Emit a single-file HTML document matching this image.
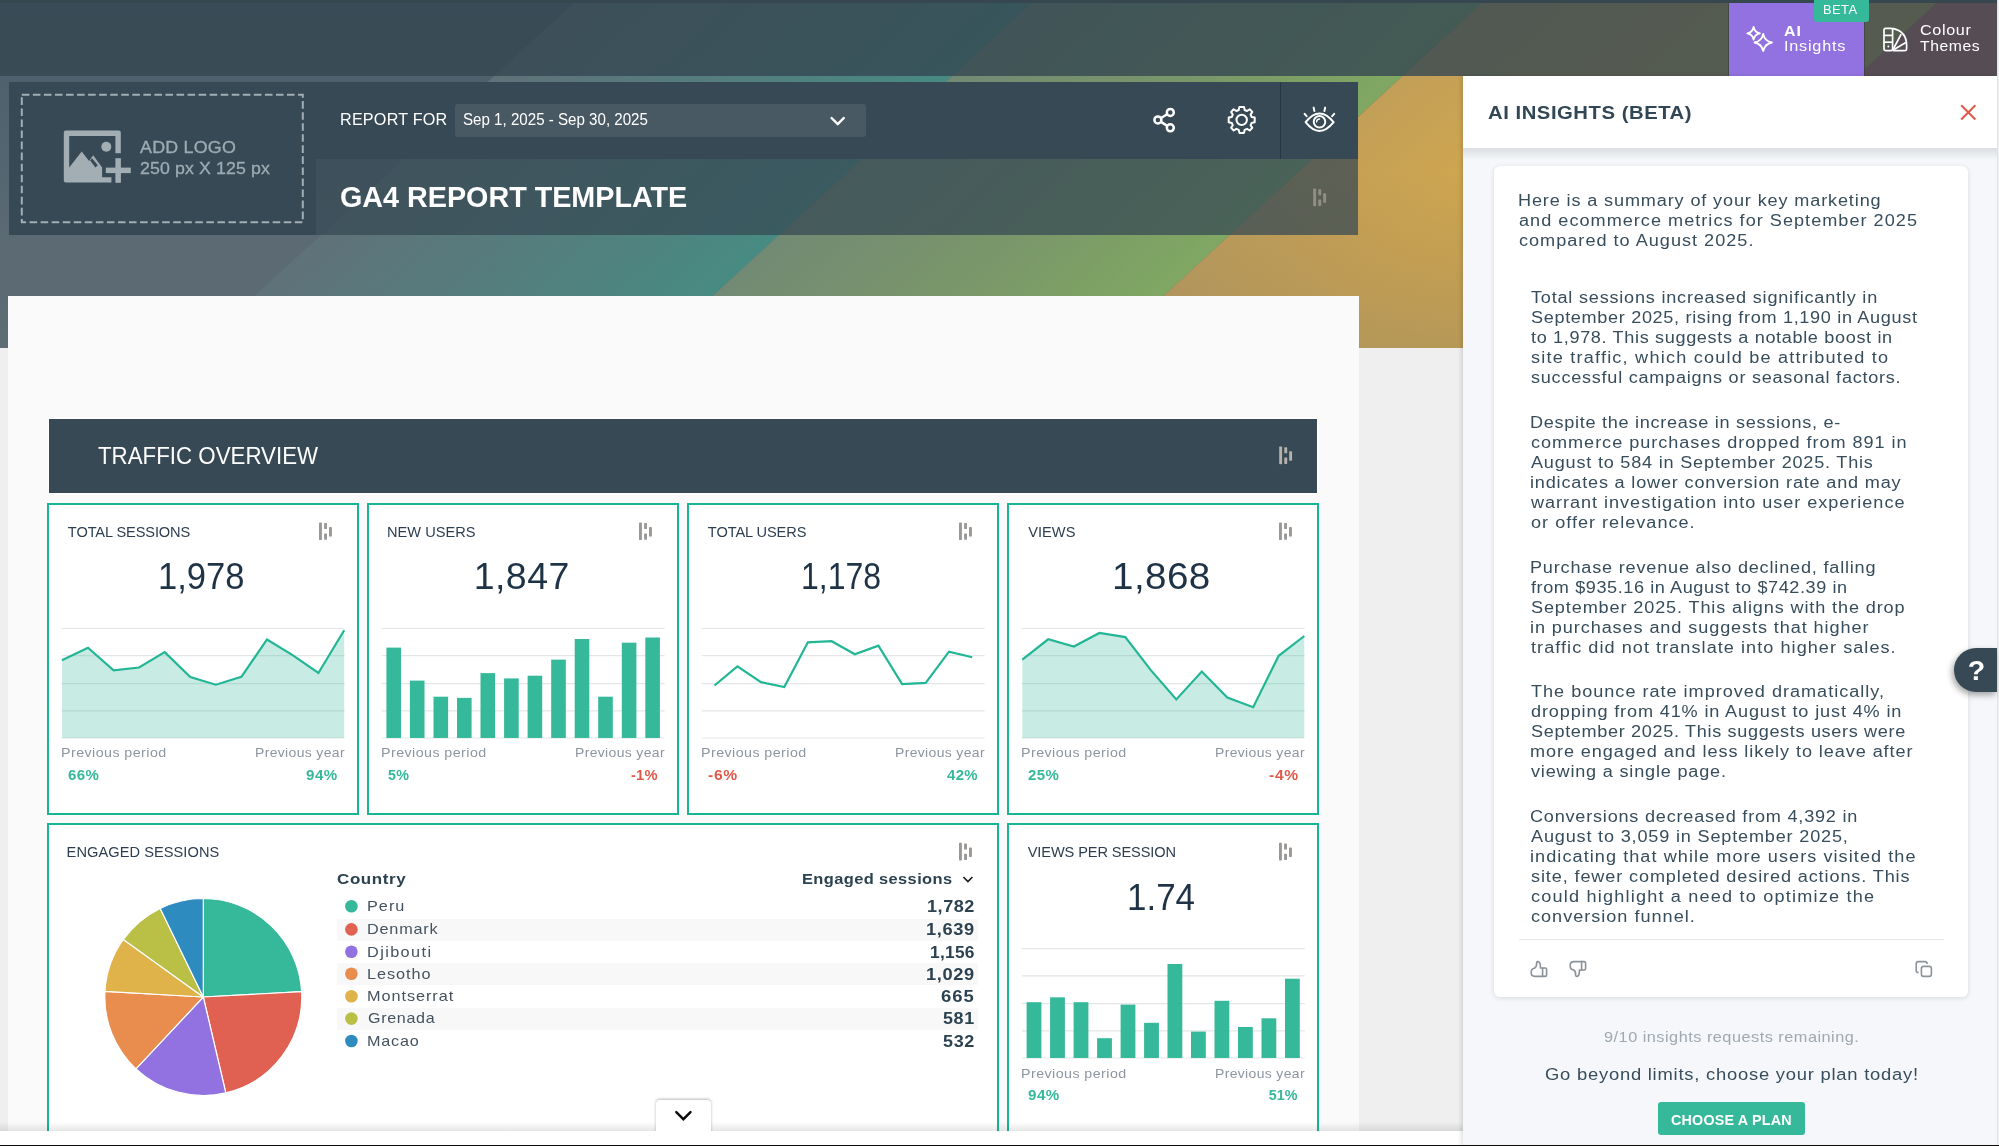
<!DOCTYPE html>
<html><head><meta charset="utf-8"><title>GA4 Report Template</title><style>
html,body{margin:0;padding:0}
body{width:1999px;height:1146px;overflow:hidden;position:relative;background:#efefef;font-family:"Liberation Sans",sans-serif}
div,svg,span{position:absolute;box-sizing:border-box}
.t{white-space:pre;line-height:normal;transform-origin:0 50%;font-family:"Liberation Sans",sans-serif}
.card{background:#fff;border:2px solid #17b593}
</style></head><body>
<!-- banner with diagonal colour bands -->
<svg width="1999" height="348" viewBox="0 0 1999 348" style="left:0;top:0">
 <defs>
  <linearGradient id="bg1" gradientUnits="userSpaceOnUse" x1="0" y1="0" x2="0" y2="348"><stop offset="0" stop-color="#4b5d69"/><stop offset="0.25" stop-color="#4f616c"/><stop offset="0.7" stop-color="#5b6a73"/><stop offset="1" stop-color="#5e6c74"/></linearGradient>
  <linearGradient id="bg2" gradientUnits="userSpaceOnUse" x1="255" y1="296" x2="465" y2="524"><stop offset="0" stop-color="#5f7279"/><stop offset="0.35" stop-color="#587a7c"/><stop offset="0.8" stop-color="#4d8580"/><stop offset="1" stop-color="#478b82"/></linearGradient>
  <linearGradient id="bg3" gradientUnits="userSpaceOnUse" x1="713" y1="296" x2="923" y2="524"><stop offset="0" stop-color="#728a74"/><stop offset="0.5" stop-color="#79966a"/><stop offset="1" stop-color="#80a862"/></linearGradient>
  <linearGradient id="bg4" gradientUnits="userSpaceOnUse" x1="1163" y1="296" x2="1373" y2="524"><stop offset="0" stop-color="#c29f58"/><stop offset="0.4" stop-color="#d0a64f"/><stop offset="1" stop-color="#d8ac49"/></linearGradient>
  <linearGradient id="bg4v" gradientUnits="userSpaceOnUse" x1="0" y1="170" x2="0" y2="348"><stop offset="0" stop-color="#6a6a6a" stop-opacity="0"/><stop offset="1" stop-color="#6f7072" stop-opacity="0.30"/></linearGradient>
 </defs>
 <rect x="0" y="0" width="1999" height="348" fill="url(#bg1)"/>
 <polygon points="577,0 1035,0 656,348 198,348" fill="url(#bg2)"/>
 <polygon points="1035,0 1485,0 1107,348 656,348" fill="url(#bg3)"/>
 <polygon points="1485,0 1940,0 1562,348 1107,348" fill="url(#bg4)"/>
 <polygon points="1485,0 1940,0 1562,348 1107,348" fill="url(#bg4v)"/>
 <polygon points="1940,0 1999,0 1999,348 1562,348" fill="#da605b"/>
</svg>
<!-- body grey below banner on the right of the page -->
<!-- top bar overlay -->
<div style="left:0;top:0;width:1999px;height:76px;background:rgba(53,71,81,0.80)"></div>
<div style="left:0;top:0;width:1999px;height:3px;background:#36474f"></div>
<!-- AI insights / colour themes -->
<div style="left:1729px;top:3px;width:135px;height:73px;background:#9272e0"></div>
<div style="left:1864px;top:3px;width:1px;height:73px;background:rgba(40,40,45,0.35)"></div>
<div style="left:1728px;top:3px;width:1px;height:73px;background:rgba(30,40,45,0.35)"></div>
<div style="left:1814px;top:0;width:55px;height:22px;background:#35b99a;border-radius:0 0 3px 3px"></div>
<div style="left:1997px;top:0;width:2px;height:1146px;background:linear-gradient(90deg,#dfe1e4,#f4f5f7)"></div>

<!-- header block -->
<div style="left:9px;top:82px;width:307px;height:153px;background:#364954"></div>
<div style="left:316px;top:82px;width:1042px;height:77px;background:#364954"></div>
<div style="left:316px;top:159px;width:1042px;height:76px;background:rgba(54,73,84,0.73)"></div>
<div style="left:1280px;top:82px;width:1px;height:77px;background:#27363f"></div>
<div style="left:455px;top:104px;width:411px;height:33px;background:rgba(255,255,255,0.09);border-radius:3px"></div>
<svg width="290" height="136" viewBox="0 0 290 136" style="left:18px;top:91px"><rect x="3.8" y="3.8" width="281" height="127.4" fill="none" stroke="#a3adb4" stroke-width="2" stroke-dasharray="7.6 3.45"/></svg>

<!-- page -->
<div style="left:8px;top:296px;width:1351px;height:850px;background:#fafafa"></div>
<div style="left:48px;top:418px;width:1270px;height:76px;background:#ffffff"></div>
<div style="left:49px;top:419px;width:1268px;height:73.5px;background:#364954"></div>

<!-- metric cards -->
<div class="card" style="left:47px;top:503px;width:312px;height:312px"></div>
<div class="card" style="left:367px;top:503px;width:312px;height:312px"></div>
<div class="card" style="left:687px;top:503px;width:312px;height:312px"></div>
<div class="card" style="left:1007px;top:503px;width:312px;height:312px"></div>
<div class="card" style="left:47px;top:823px;width:952px;height:340px"></div>
<div class="card" style="left:1007px;top:823px;width:312px;height:340px"></div>
<!-- table stripes -->
<div style="left:337px;top:918.8px;width:641px;height:22px;background:#f8f8f8"></div>
<div style="left:337px;top:963.4px;width:641px;height:22px;background:#f8f8f8"></div>
<div style="left:337px;top:1007.6px;width:641px;height:22px;background:#f8f8f8"></div>

<!-- bottom bar + tab -->
<div style="left:0;top:1122px;width:1463px;height:9px;background:linear-gradient(180deg,rgba(0,0,0,0),rgba(20,30,30,0.11))"></div>
<div style="left:656px;top:1100px;width:55px;height:40px;background:#fff;border-radius:4px 4px 0 0;box-shadow:0 -1px 3px rgba(0,0,0,0.28)"></div>
<div style="left:0;top:1131px;width:1463px;height:15px;background:#ffffff"></div>
<div style="left:656px;top:1126px;width:55px;height:8px;background:#fff"></div>

<!-- right panel -->
<div style="left:1463px;top:76px;width:534px;height:1070px;background:#f5f7fa;box-shadow:-2px 0 4px rgba(0,0,0,0.12)"></div>
<div style="left:1463px;top:148px;width:534px;height:12px;background:linear-gradient(180deg,rgba(40,50,60,0.13),rgba(40,50,60,0))"></div>
<div style="left:1463px;top:76px;width:534px;height:72px;background:#ffffff"></div>
<div style="left:1494px;top:166px;width:474px;height:831px;background:#ffffff;border-radius:6px;box-shadow:0 1px 5px rgba(30,40,60,0.14)"></div>
<div style="left:1519px;top:938.6px;width:425px;height:1.2px;background:#e4e7ea"></div>
<div style="left:1657.5px;top:1102px;width:147.5px;height:33px;background:#35b99a;border-radius:3px"></div>
<!-- help button -->
<div style="left:1954px;top:648px;width:43px;height:44px;background:#364954;border-radius:22px 0 0 22px;box-shadow:-2px 3px 6px rgba(0,0,0,0.35)"></div>
<!-- bottom black line -->
<div style="left:0;top:1145px;width:1999px;height:1px;background:#0c0c0c"></div>

<svg width="1999" height="1146" viewBox="0 0 1999 1146" style="left:0;top:0"><line x1="61.8" x2="344.6" y1="628.5" y2="628.5" stroke="#e3e5e6" stroke-width="1.2"/><line x1="61.8" x2="344.6" y1="655.7" y2="655.7" stroke="#e3e5e6" stroke-width="1.2"/><line x1="61.8" x2="344.6" y1="683.6" y2="683.6" stroke="#e3e5e6" stroke-width="1.2"/><line x1="61.8" x2="344.6" y1="710.9" y2="710.9" stroke="#e3e5e6" stroke-width="1.2"/><line x1="61.8" x2="344.6" y1="738.0" y2="738.0" stroke="#e3e5e6" stroke-width="1.2"/>
<polygon points="61.9,660.2 88.0,647.7 113.6,670.3 139.1,667.5 164.7,652.1 190.3,677.1 215.8,684.7 241.4,676.9 267.0,639.5 292.6,655.1 318.4,673.0 344.2,630.3 344.2,738.0 61.9,738.0" fill="#35b99a" fill-opacity="0.27"/><polyline points="61.9,660.2 88.0,647.7 113.6,670.3 139.1,667.5 164.7,652.1 190.3,677.1 215.8,684.7 241.4,676.9 267.0,639.5 292.6,655.1 318.4,673.0 344.2,630.3" fill="none" stroke="#22b695" stroke-width="2.2" stroke-linejoin="miter"/>
<line x1="381.8" x2="664.6" y1="628.5" y2="628.5" stroke="#e3e5e6" stroke-width="1.2"/><line x1="381.8" x2="664.6" y1="655.7" y2="655.7" stroke="#e3e5e6" stroke-width="1.2"/><line x1="381.8" x2="664.6" y1="683.6" y2="683.6" stroke="#e3e5e6" stroke-width="1.2"/><line x1="381.8" x2="664.6" y1="710.9" y2="710.9" stroke="#e3e5e6" stroke-width="1.2"/><line x1="381.8" x2="664.6" y1="738.0" y2="738.0" stroke="#e3e5e6" stroke-width="1.2"/>
<rect x="386.4" y="647.6" width="14.6" height="90.4" fill="#35b99a"/><rect x="409.9" y="680.6" width="14.6" height="57.4" fill="#35b99a"/><rect x="433.5" y="696.7" width="14.6" height="41.3" fill="#35b99a"/><rect x="457.0" y="697.9" width="14.6" height="40.1" fill="#35b99a"/><rect x="480.5" y="673.1" width="14.6" height="64.9" fill="#35b99a"/><rect x="504.1" y="678.4" width="14.6" height="59.6" fill="#35b99a"/><rect x="527.6" y="675.7" width="14.6" height="62.3" fill="#35b99a"/><rect x="551.2" y="659.6" width="14.6" height="78.4" fill="#35b99a"/><rect x="574.7" y="639.0" width="14.6" height="99.0" fill="#35b99a"/><rect x="598.2" y="696.7" width="14.6" height="41.3" fill="#35b99a"/><rect x="621.8" y="642.7" width="14.6" height="95.3" fill="#35b99a"/><rect x="645.3" y="637.5" width="14.6" height="100.5" fill="#35b99a"/>
<line x1="701.8" x2="984.6" y1="628.5" y2="628.5" stroke="#e3e5e6" stroke-width="1.2"/><line x1="701.8" x2="984.6" y1="655.7" y2="655.7" stroke="#e3e5e6" stroke-width="1.2"/><line x1="701.8" x2="984.6" y1="683.6" y2="683.6" stroke="#e3e5e6" stroke-width="1.2"/><line x1="701.8" x2="984.6" y1="710.9" y2="710.9" stroke="#e3e5e6" stroke-width="1.2"/><line x1="701.8" x2="984.6" y1="738.0" y2="738.0" stroke="#e3e5e6" stroke-width="1.2"/>
<polyline points="714.5,685.5 737.4,666.3 761.0,682.1 784.3,687.0 807.9,642.3 831.6,641.2 854.8,654.3 878.4,645.7 902.1,684.0 925.7,682.9 949.0,651.7 972.2,657.3" fill="none" stroke="#22b695" stroke-width="2.2" stroke-linejoin="miter"/>
<line x1="1021.8" x2="1304.6" y1="628.5" y2="628.5" stroke="#e3e5e6" stroke-width="1.2"/><line x1="1021.8" x2="1304.6" y1="655.7" y2="655.7" stroke="#e3e5e6" stroke-width="1.2"/><line x1="1021.8" x2="1304.6" y1="683.6" y2="683.6" stroke="#e3e5e6" stroke-width="1.2"/><line x1="1021.8" x2="1304.6" y1="710.9" y2="710.9" stroke="#e3e5e6" stroke-width="1.2"/><line x1="1021.8" x2="1304.6" y1="738.0" y2="738.0" stroke="#e3e5e6" stroke-width="1.2"/>
<polygon points="1022.3,659.6 1048.2,639.3 1073.9,646.5 1099.4,633.0 1125.3,637.1 1150.8,670.1 1176.3,699.4 1201.8,671.6 1227.3,697.5 1253.2,707.2 1278.7,655.8 1304.3,636.0 1304.3,738.0 1022.3,738.0" fill="#35b99a" fill-opacity="0.27"/><polyline points="1022.3,659.6 1048.2,639.3 1073.9,646.5 1099.4,633.0 1125.3,637.1 1150.8,670.1 1176.3,699.4 1201.8,671.6 1227.3,697.5 1253.2,707.2 1278.7,655.8 1304.3,636.0" fill="none" stroke="#22b695" stroke-width="2.2" stroke-linejoin="miter"/>
<line x1="1022.0" x2="1304.8" y1="948.6" y2="948.6" stroke="#e3e5e6" stroke-width="1.2"/><line x1="1022.0" x2="1304.8" y1="975.8" y2="975.8" stroke="#e3e5e6" stroke-width="1.2"/><line x1="1022.0" x2="1304.8" y1="1003.6" y2="1003.6" stroke="#e3e5e6" stroke-width="1.2"/><line x1="1022.0" x2="1304.8" y1="1030.9" y2="1030.9" stroke="#e3e5e6" stroke-width="1.2"/><line x1="1022.0" x2="1304.8" y1="1058.0" y2="1058.0" stroke="#e3e5e6" stroke-width="1.2"/>
<rect x="1026.6" y="1002.2" width="14.8" height="55.8" fill="#35b99a"/><rect x="1050.1" y="997.3" width="14.8" height="60.7" fill="#35b99a"/><rect x="1073.6" y="1002.2" width="14.8" height="55.8" fill="#35b99a"/><rect x="1097.1" y="1038.2" width="14.8" height="19.8" fill="#35b99a"/><rect x="1120.6" y="1004.6" width="14.8" height="53.4" fill="#35b99a"/><rect x="1144.1" y="1022.8" width="14.8" height="35.2" fill="#35b99a"/><rect x="1167.5" y="964.0" width="14.8" height="94.0" fill="#35b99a"/><rect x="1191.0" y="1031.6" width="14.8" height="26.4" fill="#35b99a"/><rect x="1214.5" y="1000.8" width="14.8" height="57.2" fill="#35b99a"/><rect x="1238.0" y="1027.0" width="14.8" height="31.0" fill="#35b99a"/><rect x="1261.5" y="1018.3" width="14.8" height="39.7" fill="#35b99a"/><rect x="1285.0" y="978.7" width="14.8" height="79.3" fill="#35b99a"/>
<path d="M203.30,997.00 L203.30,898.50 A98.50,98.50 0 0 1 301.65,991.64 Z" fill="#35b99a" stroke="#ffffff" stroke-width="1.2" stroke-linejoin="round"/><path d="M203.30,997.00 L301.65,991.64 A98.50,98.50 0 0 1 225.81,1092.89 Z" fill="#e06052" stroke="#ffffff" stroke-width="1.2" stroke-linejoin="round"/><path d="M203.30,997.00 L225.81,1092.89 A98.50,98.50 0 0 1 135.94,1068.87 Z" fill="#9272e0" stroke="#ffffff" stroke-width="1.2" stroke-linejoin="round"/><path d="M203.30,997.00 L135.94,1068.87 A98.50,98.50 0 0 1 104.96,991.30 Z" fill="#e88d4d" stroke="#ffffff" stroke-width="1.2" stroke-linejoin="round"/><path d="M203.30,997.00 L104.96,991.30 A98.50,98.50 0 0 1 123.35,939.47 Z" fill="#e0b24a" stroke="#ffffff" stroke-width="1.2" stroke-linejoin="round"/><path d="M203.30,997.00 L123.35,939.47 A98.50,98.50 0 0 1 160.22,908.42 Z" fill="#b9c045" stroke="#ffffff" stroke-width="1.2" stroke-linejoin="round"/><path d="M203.30,997.00 L160.22,908.42 A98.50,98.50 0 0 1 203.30,898.50 Z" fill="#2e8bc0" stroke="#ffffff" stroke-width="1.2" stroke-linejoin="round"/>
<circle cx="351.4" cy="906.3" r="6.3" fill="#35b99a"/>
<circle cx="351.4" cy="929.4" r="6.3" fill="#e06052"/>
<circle cx="351.4" cy="951.8" r="6.3" fill="#9272e0"/>
<circle cx="351.4" cy="973.8" r="6.3" fill="#e88d4d"/>
<circle cx="351.4" cy="996.2" r="6.3" fill="#e0b24a"/>
<circle cx="351.4" cy="1018.6" r="6.3" fill="#b9c045"/>
<circle cx="351.4" cy="1041.0" r="6.3" fill="#2e8bc0"/>
<g fill="#9b9794" fill-opacity="1.00"><rect x="319.0" y="522.4" width="2.9" height="17.6" rx="0.6"/><rect x="324.1" y="523.1" width="2.9" height="6" rx="0.6"/><rect x="324.1" y="533.4" width="2.9" height="6.3" rx="0.6"/><rect x="329.0" y="527.1" width="2.9" height="9.4" rx="0.6"/></g>
<g fill="#9b9794" fill-opacity="1.00"><rect x="639.0" y="522.4" width="2.9" height="17.6" rx="0.6"/><rect x="644.1" y="523.1" width="2.9" height="6" rx="0.6"/><rect x="644.1" y="533.4" width="2.9" height="6.3" rx="0.6"/><rect x="649.0" y="527.1" width="2.9" height="9.4" rx="0.6"/></g>
<g fill="#9b9794" fill-opacity="1.00"><rect x="959.0" y="522.4" width="2.9" height="17.6" rx="0.6"/><rect x="964.1" y="523.1" width="2.9" height="6" rx="0.6"/><rect x="964.1" y="533.4" width="2.9" height="6.3" rx="0.6"/><rect x="969.0" y="527.1" width="2.9" height="9.4" rx="0.6"/></g>
<g fill="#9b9794" fill-opacity="1.00"><rect x="1279.0" y="522.4" width="2.9" height="17.6" rx="0.6"/><rect x="1284.1" y="523.1" width="2.9" height="6" rx="0.6"/><rect x="1284.1" y="533.4" width="2.9" height="6.3" rx="0.6"/><rect x="1289.0" y="527.1" width="2.9" height="9.4" rx="0.6"/></g>
<g fill="#9b9794" fill-opacity="1.00"><rect x="959.0" y="842.8" width="2.9" height="17.6" rx="0.6"/><rect x="964.1" y="843.5" width="2.9" height="6" rx="0.6"/><rect x="964.1" y="853.8" width="2.9" height="6.3" rx="0.6"/><rect x="969.0" y="847.5" width="2.9" height="9.4" rx="0.6"/></g>
<g fill="#9b9794" fill-opacity="1.00"><rect x="1279.0" y="842.8" width="2.9" height="17.6" rx="0.6"/><rect x="1284.1" y="843.5" width="2.9" height="6" rx="0.6"/><rect x="1284.1" y="853.8" width="2.9" height="6.3" rx="0.6"/><rect x="1289.0" y="847.5" width="2.9" height="9.4" rx="0.6"/></g>
<g fill="#b5b1ad" fill-opacity="1.00"><rect x="1279.2" y="446.6" width="2.9" height="17.6" rx="0.6"/><rect x="1284.3" y="447.3" width="2.9" height="6" rx="0.6"/><rect x="1284.3" y="457.6" width="2.9" height="6.3" rx="0.6"/><rect x="1289.2" y="451.3" width="2.9" height="9.4" rx="0.6"/></g>
<g fill="#a39d96" fill-opacity="0.75"><rect x="1313.2" y="188.6" width="2.9" height="17.6" rx="0.6"/><rect x="1318.3" y="189.3" width="2.9" height="6" rx="0.6"/><rect x="1318.3" y="199.6" width="2.9" height="6.3" rx="0.6"/><rect x="1323.2" y="193.3" width="2.9" height="9.4" rx="0.6"/></g>
<polyline points="963.4,877.0 967.9,881.6 972.4,877.0" fill="none" stroke="#1d1d1f" stroke-width="1.7"/>
<polyline points="831.6,118 837.7,124.2 843.8,118" fill="none" stroke="#ffffff" stroke-width="2.4" stroke-linecap="round" stroke-linejoin="round"/>
<polyline points="676.3,1112.1 683.4,1119.2 690.5,1112.1" fill="none" stroke="#0a0a0a" stroke-width="2.4" stroke-linecap="round" stroke-linejoin="miter"/></svg>
<svg width="1999" height="1146" viewBox="0 0 1999 1146" style="left:0;top:0">
 <!-- add-logo image icon: origin 64,131 -->
 <g transform="translate(63.8,130.6)" fill="#a3adb4">
  <path fill-rule="evenodd" d="M2,0 H55 a2,2 0 0 1 2,2 V22.6 H51.6 V5.4 H5.4 V37 L17.9,20.8 L25.3,30.4 L29.4,24.7 L38.3,37 V46.6 H47.6 V52 H2 a2,2 0 0 1 -2,-2 V2 a2,2 0 0 1 2,-2 Z"/>
  <circle cx="42.5" cy="16.2" r="5"/>
  <rect x="42" y="37" width="25" height="5.5"/>
  <rect x="51.6" y="27.6" width="5.5" height="24.6"/>
 </g>
 <!-- dark notch between the two mountains -->
 <polygon points="90.2,160.4 92.0,158.2 97.8,165.2 95.4,167.5" fill="#364954"/>

 <!-- share -->
 <g fill="none" stroke="#ffffff" stroke-width="2.5">
  <circle cx="1170.3" cy="112.4" r="3.5"/>
  <circle cx="1157.9" cy="119.9" r="3.5"/>
  <circle cx="1170.3" cy="127.8" r="3.5"/>
  <line x1="1161" y1="118" x2="1167.2" y2="114.3"/>
  <line x1="1161" y1="121.9" x2="1167.2" y2="125.9"/>
 </g>
 <!-- gear -->
 <g transform="translate(1241.7,119.9)" fill="none" stroke="#ffffff" stroke-width="2">
  <circle r="5.2"/>
  <path stroke-linejoin="round" d="M-2.3,-13 H2.3 L3,-9.9 L5.3,-8.9 L8,-10.6 L10.6,-8 L8.9,-5.3 L9.9,-3 L13,-2.3 V2.3 L9.9,3 L8.9,5.3 L10.6,8 L8,10.6 L5.3,8.9 L3,9.9 L2.3,13 H-2.3 L-3,9.9 L-5.3,8.9 L-8,10.6 L-10.6,8 L-8.9,5.3 L-9.9,3 L-13,2.3 V-2.3 L-9.9,-3 L-8.9,-5.3 L-10.6,-8 L-8,-10.6 L-5.3,-8.9 L-3,-9.9 Z"/>
 </g>
 <!-- eye -->
 <g fill="none" stroke="#ffffff" stroke-width="2" stroke-linecap="round">
  <path d="M1305.6,122.2 Q1319.5,104.6 1333.6,122.2 Q1319.5,139.8 1305.6,122.2 Z" stroke-linejoin="round"/>
  <circle cx="1319.5" cy="121.8" r="5.8"/>
  <path d="M1316.6,122 A3,3 0 0 1 1319.6,119" stroke-width="1.4"/>
  <line x1="1314.4" y1="111" x2="1313.6" y2="107.6"/>
  <line x1="1324.4" y1="111" x2="1325.2" y2="107.6"/>
  <line x1="1306.6" y1="116.2" x2="1304.6" y2="113.8"/>
  <line x1="1332.2" y1="116.2" x2="1334.2" y2="113.8"/>
 </g>

 <!-- AI sparkle -->
 <g fill="none" stroke="#ffffff" stroke-width="1.8" stroke-linejoin="round">
  <path d="M1753.6,27 Q1754.6,32.3 1759.9,33.3 Q1754.6,34.3 1753.6,39.6 Q1752.6,34.3 1747.3,33.3 Q1752.6,32.3 1753.6,27 Z"/>
  <path d="M1763.2,33.8 Q1764.6,41.1 1771.9,42.5 Q1764.6,43.9 1763.2,51.2 Q1761.8,43.9 1754.5,42.5 Q1761.8,41.1 1763.2,33.8 Z"/>
 </g>
 <!-- colour themes palette -->
 <g fill="none" stroke="#ffffff" stroke-width="1.7" stroke-linejoin="round">
  <rect x="1884" y="28.4" width="8.6" height="22.2" rx="1.6"/>
  <line x1="1884" y1="35.4" x2="1892.6" y2="35.4"/>
  <line x1="1884" y1="42.2" x2="1892.6" y2="42.2"/>
  <path d="M1892.6,28.4 Q1906.6,31.4 1906.6,45.4 V49 Q1906.6,50.6 1905,50.6 H1892.6"/>
  <line x1="1892.8" y1="50" x2="1901.2" y2="34.2"/>
  <line x1="1892.8" y1="50.2" x2="1905.8" y2="42.4"/>
 </g>
 <circle cx="1888.4" cy="46.4" r="1" fill="#ffffff"/>

 <!-- close X -->
 <g stroke="#e05a4c" stroke-width="2.1" stroke-linecap="butt">
  <line x1="1961.2" y1="105.2" x2="1975.4" y2="119.4"/>
  <line x1="1975.4" y1="105.2" x2="1961.2" y2="119.4"/>
 </g>

 <!-- thumbs up -->
 <g fill="none" stroke="#8a9399" stroke-width="1.6" stroke-linejoin="round" stroke-linecap="round">
  <path d="M1542.6,968 H1545.2 Q1546.6,968 1546.6,969.4 V975 Q1546.6,976.4 1545.2,976.4 H1542.6 Z"/>
  <path d="M1542.6,976.4 H1534.6 Q1531.2,976.4 1531.2,972.6 Q1531.2,968.6 1534.4,968.2 Q1537,966.6 1536.6,962.8 Q1536.8,961.4 1538.2,961.6 Q1540.8,962.8 1540.4,968 H1542.6"/>
 </g>
 <!-- thumbs down -->
 <g fill="none" stroke="#8a9399" stroke-width="1.6" stroke-linejoin="round" stroke-linecap="round">
  <path d="M1581.6,961.6 H1584.2 Q1585.6,961.6 1585.6,963 V968.6 Q1585.6,970 1584.2,970 H1581.6 Z"/>
  <path d="M1581.6,961.6 H1573.6 Q1570.2,961.6 1570.2,965.4 Q1570.2,969.4 1573.4,969.8 Q1576,971.4 1575.6,975.2 Q1575.8,976.6 1577.2,976.4 Q1579.8,975.2 1579.4,970 H1581.6"/>
 </g>
 <!-- copy -->
 <g fill="none" stroke="#8a9399" stroke-width="1.6" stroke-linejoin="round">
  <rect x="1921.4" y="966.4" width="10" height="10" rx="2.2"/>
  <path d="M1918.6,972.4 H1918.2 Q1916.2,972.4 1916.2,970.4 V963.8 Q1916.2,961.6 1918.4,961.6 H1925 Q1927,961.6 1927,963.6 V964"/>
 </g>
</svg>

<div style="left:0;top:0;width:1999px;height:1146px;will-change:transform">
<span class="t" style="left:1823.34px;top:3.33px;font-size:12.00px;color:#ffffff;letter-spacing:0.419px;transform:scaleX(1.0748);">BETA</span>
<span class="t" style="left:1784.20px;top:22.53px;font-size:14.10px;font-weight:700;color:#ffffff;letter-spacing:0.917px;transform:scaleX(1.1300);">AI</span>
<span class="t" style="left:1783.60px;top:38.45px;font-size:14.40px;color:#ffffff;letter-spacing:0.674px;transform:scaleX(1.1300);">Insights</span>
<span class="t" style="left:1919.78px;top:22.25px;font-size:14.40px;color:#ffffff;letter-spacing:0.565px;transform:scaleX(1.1252);">Colour</span>
<span class="t" style="left:1920.25px;top:38.45px;font-size:14.40px;color:#ffffff;letter-spacing:0.533px;transform:scaleX(1.0929);">Themes</span>
<span class="t" style="left:140.37px;top:137.44px;font-size:17.40px;color:#9eaab2;letter-spacing:0.209px;transform:scaleX(1.0270);-webkit-text-stroke:0.35px #9eaab2;">ADD LOGO</span>
<span class="t" style="left:139.51px;top:158.34px;font-size:17.40px;color:#9eaab2;letter-spacing:0.113px;transform:scaleX(1.0212);-webkit-text-stroke:0.35px #9eaab2;">250 px X 125 px</span>
<span class="t" style="left:340.47px;top:111.28px;font-size:15.70px;color:#ffffff;letter-spacing:0.202px;transform:scaleX(1.0305);">REPORT FOR</span>
<span class="t" style="left:463.11px;top:111.28px;font-size:15.70px;color:#ffffff;letter-spacing:0.000px;transform:scaleX(0.9637);">Sep 1, 2025 - Sep 30, 2025</span>
<span class="t" style="left:340.32px;top:180.29px;font-size:29.70px;font-weight:700;color:#ffffff;letter-spacing:0.000px;transform:scaleX(0.9673);">GA4 REPORT TEMPLATE</span>
<span class="t" style="left:98.10px;top:441.67px;font-size:24.20px;color:#ffffff;letter-spacing:0.000px;transform:scaleX(0.9217);">TRAFFIC OVERVIEW</span>
<span class="t" style="left:67.87px;top:523.67px;font-size:14.60px;color:#2c3e50;letter-spacing:-0.109px;">TOTAL SESSIONS</span>
<span class="t" style="left:158.17px;top:555.32px;font-size:37.50px;color:#1f3347;letter-spacing:0.000px;transform:scaleX(0.9221);">1,978</span>
<span class="t" style="left:61.03px;top:745.40px;font-size:12.80px;color:#8c96a0;letter-spacing:0.391px;transform:scaleX(1.1143);">Previous period</span>
<span class="t" style="left:255.06px;top:745.40px;font-size:12.80px;color:#8c96a0;letter-spacing:0.326px;transform:scaleX(1.0903);">Previous year</span>
<span class="t" style="left:67.95px;top:767.04px;font-size:14.30px;font-weight:700;color:#35b99a;letter-spacing:0.411px;transform:scaleX(1.0509);">66%</span>
<span class="t" style="left:306.48px;top:767.04px;font-size:14.30px;font-weight:700;color:#35b99a;letter-spacing:0.458px;transform:scaleX(1.0569);">94%</span>
<span class="t" style="left:387.00px;top:523.67px;font-size:14.60px;color:#2c3e50;letter-spacing:0.010px;">NEW USERS</span>
<span class="t" style="left:473.74px;top:555.32px;font-size:37.50px;color:#1f3347;letter-spacing:0.425px;">1,847</span>
<span class="t" style="left:381.03px;top:745.40px;font-size:12.80px;color:#8c96a0;letter-spacing:0.391px;transform:scaleX(1.1143);">Previous period</span>
<span class="t" style="left:575.06px;top:745.40px;font-size:12.80px;color:#8c96a0;letter-spacing:0.326px;transform:scaleX(1.0903);">Previous year</span>
<span class="t" style="left:388.06px;top:767.04px;font-size:14.30px;font-weight:700;color:#35b99a;letter-spacing:0.345px;">5%</span>
<span class="t" style="left:631.23px;top:767.04px;font-size:14.30px;font-weight:700;color:#e05a4c;letter-spacing:0.185px;transform:scaleX(1.0253);">-1%</span>
<span class="t" style="left:707.87px;top:523.67px;font-size:14.60px;color:#2c3e50;letter-spacing:-0.089px;">TOTAL USERS</span>
<span class="t" style="left:801.46px;top:555.32px;font-size:37.50px;color:#1f3347;letter-spacing:0.000px;transform:scaleX(0.8528);">1,178</span>
<span class="t" style="left:701.03px;top:745.40px;font-size:12.80px;color:#8c96a0;letter-spacing:0.391px;transform:scaleX(1.1143);">Previous period</span>
<span class="t" style="left:895.06px;top:745.40px;font-size:12.80px;color:#8c96a0;letter-spacing:0.326px;transform:scaleX(1.0903);">Previous year</span>
<span class="t" style="left:707.89px;top:767.04px;font-size:14.30px;font-weight:700;color:#e05a4c;letter-spacing:0.643px;transform:scaleX(1.0936);">-6%</span>
<span class="t" style="left:947.07px;top:767.04px;font-size:14.30px;font-weight:700;color:#35b99a;letter-spacing:0.358px;transform:scaleX(1.0435);">42%</span>
<span class="t" style="left:1028.14px;top:523.67px;font-size:14.60px;color:#2c3e50;letter-spacing:0.051px;">VIEWS</span>
<span class="t" style="left:1112.21px;top:555.32px;font-size:37.50px;color:#1f3347;letter-spacing:0.400px;transform:scaleX(1.0301);">1,868</span>
<span class="t" style="left:1021.03px;top:745.40px;font-size:12.80px;color:#8c96a0;letter-spacing:0.391px;transform:scaleX(1.1143);">Previous period</span>
<span class="t" style="left:1215.06px;top:745.40px;font-size:12.80px;color:#8c96a0;letter-spacing:0.326px;transform:scaleX(1.0903);">Previous year</span>
<span class="t" style="left:1027.98px;top:767.04px;font-size:14.30px;font-weight:700;color:#35b99a;letter-spacing:0.407px;transform:scaleX(1.0502);">25%</span>
<span class="t" style="left:1268.59px;top:767.04px;font-size:14.30px;font-weight:700;color:#e05a4c;letter-spacing:0.627px;transform:scaleX(1.0910);">-4%</span>
<span class="t" style="left:66.60px;top:844.17px;font-size:14.60px;color:#2c3e50;letter-spacing:0.067px;">ENGAGED SESSIONS</span>
<span class="t" style="left:336.90px;top:870.14px;font-size:15.30px;font-weight:700;color:#2c4250;letter-spacing:0.576px;transform:scaleX(1.1078);">Country</span>
<span class="t" style="left:802.00px;top:870.04px;font-size:15.30px;font-weight:700;color:#2c4250;letter-spacing:0.369px;transform:scaleX(1.0730);">Engaged sessions</span>
<span class="t" style="left:367.37px;top:898.05px;font-size:14.40px;color:#44535f;letter-spacing:0.902px;transform:scaleX(1.1300);">Peru</span>
<span class="t" style="left:926.86px;top:897.16px;font-size:16.60px;font-weight:700;color:#2c4250;letter-spacing:0.496px;transform:scaleX(1.0884);">1,782</span>
<span class="t" style="left:367.37px;top:921.15px;font-size:14.40px;color:#44535f;letter-spacing:0.683px;transform:scaleX(1.1300);">Denmark</span>
<span class="t" style="left:926.15px;top:920.26px;font-size:16.60px;font-weight:700;color:#2c4250;letter-spacing:0.547px;transform:scaleX(1.0984);">1,639</span>
<span class="t" style="left:367.37px;top:943.55px;font-size:14.40px;color:#44535f;letter-spacing:1.238px;transform:scaleX(1.1300);">Djibouti</span>
<span class="t" style="left:929.71px;top:942.66px;font-size:16.60px;font-weight:700;color:#2c4250;letter-spacing:0.256px;transform:scaleX(1.0437);">1,156</span>
<span class="t" style="left:367.37px;top:965.55px;font-size:14.40px;color:#44535f;letter-spacing:0.847px;transform:scaleX(1.1300);">Lesotho</span>
<span class="t" style="left:926.15px;top:964.66px;font-size:16.60px;font-weight:700;color:#2c4250;letter-spacing:0.547px;transform:scaleX(1.0984);">1,029</span>
<span class="t" style="left:367.37px;top:987.95px;font-size:14.40px;color:#44535f;letter-spacing:0.829px;transform:scaleX(1.1300);">Montserrat</span>
<span class="t" style="left:941.32px;top:987.06px;font-size:16.60px;font-weight:700;color:#2c4250;letter-spacing:0.833px;transform:scaleX(1.1137);">665</span>
<span class="t" style="left:367.89px;top:1010.35px;font-size:14.40px;color:#44535f;letter-spacing:0.595px;transform:scaleX(1.1178);">Grenada</span>
<span class="t" style="left:942.85px;top:1009.46px;font-size:16.60px;font-weight:700;color:#2c4250;letter-spacing:0.596px;transform:scaleX(1.0786);">581</span>
<span class="t" style="left:367.37px;top:1032.75px;font-size:14.40px;color:#44535f;letter-spacing:0.700px;transform:scaleX(1.1240);">Macao</span>
<span class="t" style="left:942.85px;top:1031.86px;font-size:16.60px;font-weight:700;color:#2c4250;letter-spacing:0.629px;transform:scaleX(1.0839);">532</span>
<span class="t" style="left:1027.74px;top:844.17px;font-size:14.60px;color:#2c3e50;letter-spacing:-0.111px;">VIEWS PER SESSION</span>
<span class="t" style="left:1127.34px;top:875.52px;font-size:37.50px;color:#1f3347;letter-spacing:0.000px;transform:scaleX(0.9327);">1.74</span>
<span class="t" style="left:1021.03px;top:1066.00px;font-size:12.80px;color:#8c96a0;letter-spacing:0.391px;transform:scaleX(1.1143);">Previous period</span>
<span class="t" style="left:1215.06px;top:1066.00px;font-size:12.80px;color:#8c96a0;letter-spacing:0.326px;transform:scaleX(1.0903);">Previous year</span>
<span class="t" style="left:1027.97px;top:1087.34px;font-size:14.30px;font-weight:700;color:#35b99a;letter-spacing:0.475px;transform:scaleX(1.0592);">94%</span>
<span class="t" style="left:1268.66px;top:1087.34px;font-size:14.30px;font-weight:700;color:#35b99a;letter-spacing:0.096px;">51%</span>
<span class="t" style="left:1487.80px;top:101.86px;font-size:18.70px;font-weight:700;color:#324756;letter-spacing:0.498px;transform:scaleX(1.0841);">AI INSIGHTS (BETA)</span>
<span class="t" style="left:1518.22px;top:192.00px;font-size:16.00px;color:#374d5b;letter-spacing:0.770px;transform:scaleX(1.1300);">Here is a summary of your key marketing</span>
<span class="t" style="left:1518.93px;top:212.00px;font-size:16.00px;color:#374d5b;letter-spacing:0.912px;transform:scaleX(1.1300);">and ecommerce metrics for September 2025</span>
<span class="t" style="left:1518.93px;top:232.00px;font-size:16.00px;color:#374d5b;letter-spacing:0.898px;transform:scaleX(1.1300);">compared to August 2025.</span>
<span class="t" style="left:1530.99px;top:289.20px;font-size:16.00px;color:#374d5b;letter-spacing:0.700px;transform:scaleX(1.1300);">Total sessions increased significantly in</span>
<span class="t" style="left:1530.58px;top:309.23px;font-size:16.00px;color:#374d5b;letter-spacing:0.593px;transform:scaleX(1.1300);">September 2025, rising from 1,190 in August</span>
<span class="t" style="left:1531.13px;top:329.26px;font-size:16.00px;color:#374d5b;letter-spacing:0.578px;transform:scaleX(1.1300);">to 1,978. This suggests a notable boost in</span>
<span class="t" style="left:1530.90px;top:349.29px;font-size:16.00px;color:#374d5b;letter-spacing:1.076px;transform:scaleX(1.1300);">site traffic, which could be attributed to</span>
<span class="t" style="left:1530.90px;top:369.32px;font-size:16.00px;color:#374d5b;letter-spacing:0.663px;transform:scaleX(1.1300);">successful campaigns or seasonal factors.</span>
<span class="t" style="left:1529.92px;top:414.30px;font-size:16.00px;color:#374d5b;letter-spacing:0.629px;transform:scaleX(1.1300);">Despite the increase in sessions, e-</span>
<span class="t" style="left:1530.63px;top:434.33px;font-size:16.00px;color:#374d5b;letter-spacing:0.860px;transform:scaleX(1.1300);">commerce purchases dropped from 891 in</span>
<span class="t" style="left:1531.36px;top:454.36px;font-size:16.00px;color:#374d5b;letter-spacing:0.704px;transform:scaleX(1.1300);">August to 584 in September 2025. This</span>
<span class="t" style="left:1530.19px;top:474.39px;font-size:16.00px;color:#374d5b;letter-spacing:0.729px;transform:scaleX(1.1300);">indicates a lower conversion rate and may</span>
<span class="t" style="left:1531.43px;top:494.42px;font-size:16.00px;color:#374d5b;letter-spacing:0.859px;transform:scaleX(1.1300);">warrant investigation into user experience</span>
<span class="t" style="left:1530.64px;top:514.45px;font-size:16.00px;color:#374d5b;letter-spacing:0.895px;transform:scaleX(1.1300);">or offer relevance.</span>
<span class="t" style="left:1529.92px;top:558.60px;font-size:16.00px;color:#374d5b;letter-spacing:0.721px;transform:scaleX(1.1300);">Purchase revenue also declined, falling</span>
<span class="t" style="left:1531.14px;top:578.63px;font-size:16.00px;color:#374d5b;letter-spacing:0.523px;transform:scaleX(1.1297);">from $935.16 in August to $742.39 in</span>
<span class="t" style="left:1530.58px;top:598.66px;font-size:16.00px;color:#374d5b;letter-spacing:0.779px;transform:scaleX(1.1300);">September 2025. This aligns with the drop</span>
<span class="t" style="left:1530.19px;top:618.69px;font-size:16.00px;color:#374d5b;letter-spacing:0.808px;transform:scaleX(1.1300);">in purchases and suggests that higher</span>
<span class="t" style="left:1531.13px;top:638.72px;font-size:16.00px;color:#374d5b;letter-spacing:0.934px;transform:scaleX(1.1300);">traffic did not translate into higher sales.</span>
<span class="t" style="left:1530.99px;top:682.90px;font-size:16.00px;color:#374d5b;letter-spacing:0.880px;transform:scaleX(1.1300);">The bounce rate improved dramatically,</span>
<span class="t" style="left:1530.64px;top:702.93px;font-size:16.00px;color:#374d5b;letter-spacing:0.767px;transform:scaleX(1.1300);">dropping from 41% in August to just 4% in</span>
<span class="t" style="left:1530.58px;top:722.96px;font-size:16.00px;color:#374d5b;letter-spacing:0.588px;transform:scaleX(1.1300);">September 2025. This suggests users were</span>
<span class="t" style="left:1530.20px;top:742.99px;font-size:16.00px;color:#374d5b;letter-spacing:0.817px;transform:scaleX(1.1300);">more engaged and less likely to leave after</span>
<span class="t" style="left:1531.34px;top:763.02px;font-size:16.00px;color:#374d5b;letter-spacing:0.717px;transform:scaleX(1.1300);">viewing a single page.</span>
<span class="t" style="left:1530.48px;top:807.70px;font-size:16.00px;color:#374d5b;letter-spacing:0.700px;transform:scaleX(1.1300);">Conversions decreased from 4,392 in</span>
<span class="t" style="left:1531.36px;top:827.73px;font-size:16.00px;color:#374d5b;letter-spacing:0.734px;transform:scaleX(1.1300);">August to 3,059 in September 2025,</span>
<span class="t" style="left:1530.19px;top:847.76px;font-size:16.00px;color:#374d5b;letter-spacing:0.943px;transform:scaleX(1.1300);">indicating that while more users visited the</span>
<span class="t" style="left:1530.90px;top:867.79px;font-size:16.00px;color:#374d5b;letter-spacing:0.784px;transform:scaleX(1.1300);">site, fewer completed desired actions. This</span>
<span class="t" style="left:1530.63px;top:887.82px;font-size:16.00px;color:#374d5b;letter-spacing:1.063px;transform:scaleX(1.1300);">could highlight a need to optimize the</span>
<span class="t" style="left:1530.63px;top:907.85px;font-size:16.00px;color:#374d5b;letter-spacing:0.884px;transform:scaleX(1.1300);">conversion funnel.</span>
<span class="t" style="left:1604.14px;top:1028.86px;font-size:14.50px;color:#a0a8b0;letter-spacing:0.442px;transform:scaleX(1.1230);">9/10 insights requests remaining.</span>
<span class="t" style="left:1545.07px;top:1064.53px;font-size:16.30px;color:#374d5b;letter-spacing:0.675px;transform:scaleX(1.1300);">Go beyond limits, choose your plan today!</span>
<span class="t" style="left:1671.31px;top:1111.61px;font-size:13.90px;font-weight:700;color:#ffffff;letter-spacing:0.177px;transform:scaleX(1.0316);">CHOOSE A PLAN</span>
<span class="t" style="left:1967.64px;top:654.48px;font-size:28.50px;font-weight:700;color:#ffffff;letter-spacing:0.000px;">?</span>
</div>
</body></html>
